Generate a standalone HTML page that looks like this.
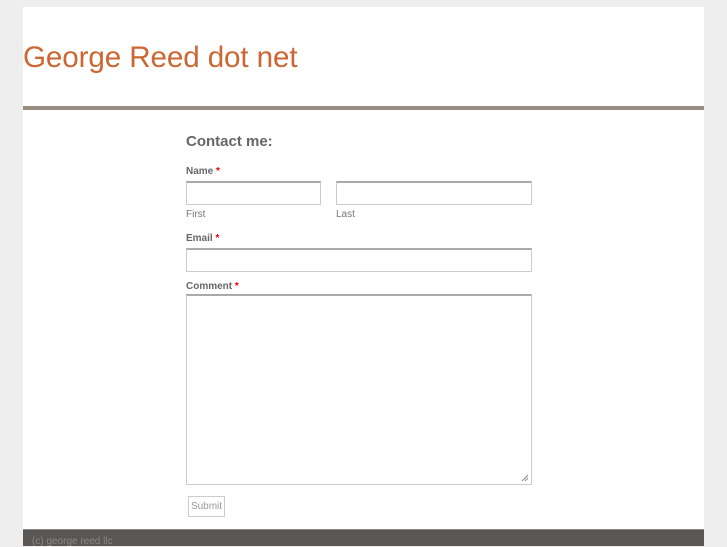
<!DOCTYPE html>
<html><head><meta charset="utf-8"><style>
html,body{margin:0;padding:0;width:727px;height:545px;overflow:hidden;background:#eeeeee;font-family:"Liberation Sans",sans-serif;}
#wrap{position:absolute;left:23px;top:7px;width:681px;height:538px;background:#fff;}
h1{position:absolute;left:0;top:34px;margin:0;font-weight:normal;font-size:29.6px;color:#cc6633;letter-spacing:-0.1px;}
.rule{position:absolute;left:0;top:99px;width:681px;height:4px;background:#968e80;}
h2{position:absolute;left:163px;top:126px;margin:0;font-size:15px;color:#666;font-weight:bold;}
.lbl{position:absolute;font-size:10px;font-weight:bold;color:#666;}
.lbl span{color:#e00;}
.sub{position:absolute;font-size:10px;color:#777;}
.inp{position:absolute;box-sizing:border-box;border:1px solid #ccc;border-top:2px solid #aaa;background:#fff;}
.btn{position:absolute;left:165px;top:489px;width:37px;height:21px;box-sizing:border-box;border:1px solid #ccc;font-size:10px;color:#999;text-align:center;line-height:19px;}
#foot{position:absolute;left:23px;top:529px;width:681px;height:16px;background:#5a5654;border-top:1px solid #888;}
#foot div{position:absolute;left:9px;top:6px;font-size:10px;color:#888;}
</style></head><body>
<div id="wrap">
<h1>George Reed dot net</h1>
<div class="rule"></div>
<h2>Contact me:</h2>
<div class="lbl" style="left:163px;top:159px">Name <span>*</span></div>
<div class="inp" style="left:163px;top:174px;width:135px;height:24px"></div>
<div class="inp" style="left:313px;top:174px;width:196px;height:24px"></div>
<div class="sub" style="left:163px;top:202px">First</div>
<div class="sub" style="left:313px;top:202px">Last</div>
<div class="lbl" style="left:163px;top:226px">Email <span>*</span></div>
<div class="inp" style="left:163px;top:241px;width:346px;height:24px"></div>
<div class="lbl" style="left:163px;top:274px">Comment <span>*</span></div>
<div class="inp" style="left:163px;top:287px;width:346px;height:191px">
<svg style="position:absolute;right:3px;bottom:3px" width="7" height="7"><path d="M1 7L7 1M4 7L7 4" stroke="#888" stroke-width="1"/></svg>
</div>
<div class="btn">Submit</div>
</div>
<div id="foot"><div>(c) george reed llc</div></div>
</body></html>
